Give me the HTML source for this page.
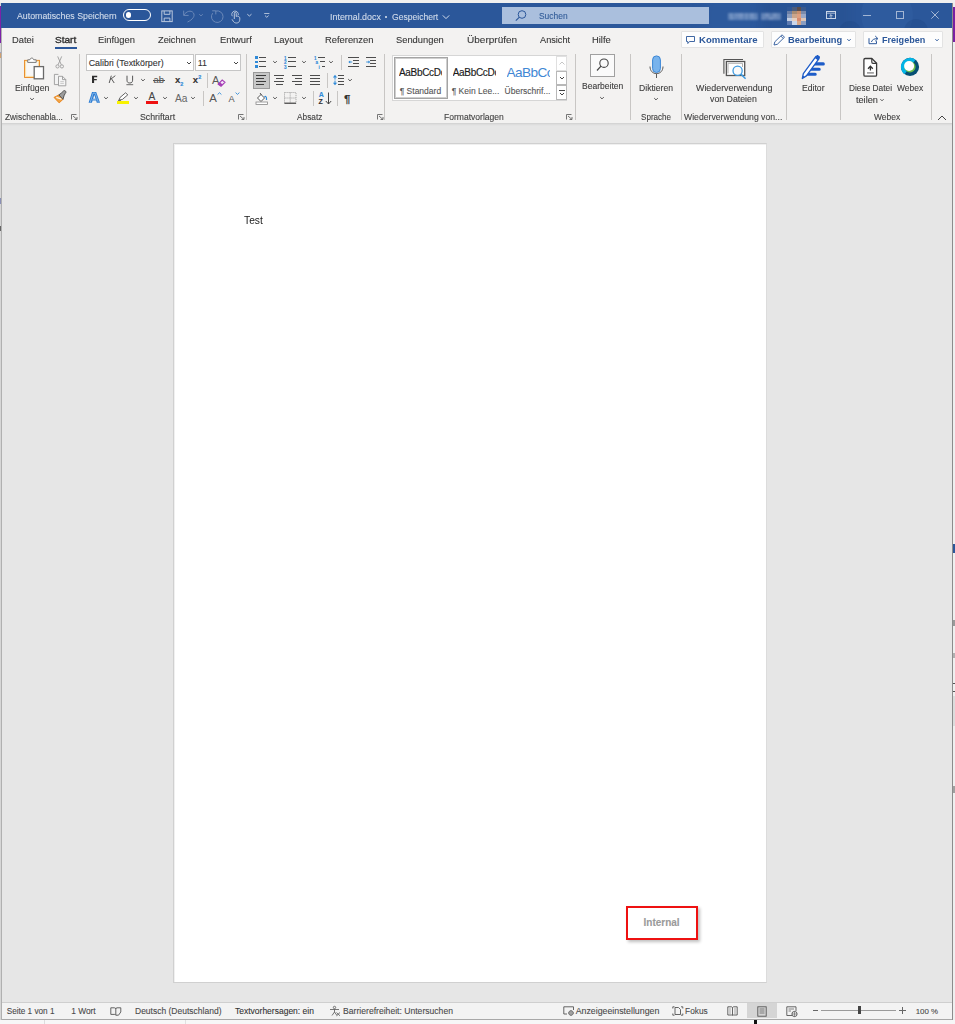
<!DOCTYPE html>
<html><head><meta charset="utf-8">
<style>
*{margin:0;padding:0;box-sizing:border-box}
html,body{width:955px;height:1024px;overflow:hidden;background:#f6f6f6;font-family:"Liberation Sans",sans-serif;position:relative}
.a{position:absolute}
.t{position:absolute;white-space:nowrap;line-height:1;-webkit-text-stroke:0.1px currentColor}
svg.a{overflow:visible}
</style></head><body>

<div class="a" style="left:0px;top:0px;width:955px;height:3px;background:#f0f0f0"></div>
<div class="a" style="left:0px;top:3px;width:1px;height:1021px;background:#d6d6d6"></div>
<div class="a" style="left:0px;top:6px;width:1px;height:37px;background:#7b22a8"></div>
<div class="a" style="left:0px;top:52px;width:1px;height:2px;background:#9aa0c8"></div>
<div class="a" style="left:0px;top:53px;width:1px;height:5px;background:#d0a070"></div>
<div class="a" style="left:0px;top:198px;width:1px;height:6px;background:#8a8fb5"></div>
<div class="a" style="left:0px;top:226px;width:1px;height:5px;background:#666"></div>
<div class="a" style="left:953px;top:3px;width:2px;height:1021px;background:#efefef"></div>
<div class="a" style="left:953px;top:7px;width:2px;height:35px;background:#7b1fa2"></div>
<div class="a" style="left:953px;top:544px;width:2px;height:9px;background:#2b579a"></div>
<div class="a" style="left:953px;top:620px;width:2px;height:6px;background:#9a9a9a"></div>
<div class="a" style="left:953px;top:653px;width:2px;height:5px;background:#b0b0b0"></div>
<div class="a" style="left:953px;top:683px;width:2px;height:1px;background:#555"></div>
<div class="a" style="left:953px;top:691px;width:2px;height:1px;background:#555"></div>
<div class="a" style="left:953px;top:696px;width:2px;height:30px;background:#dcdcdc"></div>
<div class="a" style="left:953px;top:786px;width:2px;height:7px;background:#a0a0a0"></div>
<div class="a" style="left:1px;top:3px;width:952px;height:1017px;background:#e6e6e6;border-left:1px solid #b0b0b0;border-right:1px solid #8c8c8c"></div>
<div class="a" style="left:1px;top:3px;width:951px;height:25px;background:#2b579a"></div>
<div class="a" style="left:1px;top:3px;width:951px;height:25px;overflow:hidden"><div class="a" style="left:700px;top:-20px;width:60px;height:70px;border-radius:50%;background:rgba(70,120,190,.10);filter:blur(6px)"></div><div class="a" style="left:760px;top:-10px;width:90px;height:50px;background:rgba(20,50,100,.10);filter:blur(6px)"></div><div class="a" style="left:860px;top:-14px;width:52px;height:52px;border-radius:50%;background:rgba(80,130,200,.10)"></div><div class="a" style="left:903px;top:16px;width:24px;height:24px;border-radius:50%;background:rgba(10,40,90,.12)"></div><div class="a" style="left:838px;top:18px;width:22px;height:22px;border-radius:50%;background:rgba(10,40,90,.10)"></div></div>
<div class="t" style="left:17.30px;top:11px;font-size:9.4px;color:#d3ddec;font-weight:normal;transform:scaleX(0.9382);transform-origin:0 0;">Automatisches Speichern</div>
<div class="a" style="left:123px;top:9px;width:28px;height:12px;border:1.3px solid #fff;border-radius:6px"></div>
<div class="a" style="left:125.8px;top:12.2px;width:5.6px;height:5.6px;background:#fff;border-radius:50%"></div>
<svg class="a" style="left:158px;top:6px;" width="70" height="20" viewBox="0 0 70 20"><rect x="3.8" y="4.9" width="10.4" height="10.7" fill="none" stroke="#b9c7dd" stroke-width="1"/><path d="M6.2 4.9 V8.3 H11.9 V4.9 M6.2 15.6 V12.1 H11.9 V15.6" fill="none" stroke="#b9c7dd" stroke-width="1"/><path d="M25.7 4.6 V9.4 H30.6" fill="none" stroke="#6b89b9" stroke-width="1"/><path d="M25.8 9.2 C28.2 5.2 33 3.8 35.3 6.8 C37.6 9.8 34.5 13.8 29.5 16" fill="none" stroke="#6b89b9" stroke-width="1"/><path d="M41.2 8.2 L43 9.9 L44.8 8.2" fill="none" stroke="#6b89b9" stroke-width="0.9"/><path d="M57.6 5.1 A5.8 5.8 0 1 1 54.6 7.2" fill="none" stroke="#6b89b9" stroke-width="1"/><path d="M54.2 4.8 H57.8 V8.4" fill="none" stroke="#6b89b9" stroke-width="1"/></svg>
<svg class="a" style="left:226px;top:6px;" width="50" height="20" viewBox="0 0 50 20"><path d="M6.3 10.2 A3.3 3.3 0 1 1 12.3 9" fill="none" stroke="#b9c7dd" stroke-width="0.9"/><path d="M8.3 13 V7.2 A0.95 0.95 0 0 1 10.2 7.2 V10.6" fill="none" stroke="#b9c7dd" stroke-width="1"/><path d="M10.2 10.3 C11.6 9.8 13 10.2 13.5 11.2 C14 12.3 13.9 14 13.4 15.3 C12.8 16.6 11.6 17 10.4 17 C9 17 8 16.4 7.2 15.2 L6 13.3" fill="none" stroke="#b9c7dd" stroke-width="1"/><path d="M21.3 8.2 L23.4 10 L25.5 8.2" fill="none" stroke="#b9c7dd" stroke-width="1"/><path d="M38.2 7.5 H43.4" stroke="#b9c7dd" stroke-width="0.9"/><path d="M39 9.6 L40.8 11.3 L42.6 9.6" fill="none" stroke="#b9c7dd" stroke-width="1"/></svg>
<div class="t" style="left:329.50px;top:12px;font-size:9.4px;color:#d3ddec;font-weight:normal;transform:scaleX(0.9476);transform-origin:0 0;">Internal.docx</div>
<div class="a" style="left:385.3px;top:15.5px;width:2px;height:2px;background:#dfe7f3;border-radius:50%"></div>
<div class="t" style="left:392.10px;top:12px;font-size:9.4px;color:#d3ddec;font-weight:normal;transform:scaleX(0.9136);transform-origin:0 0;">Gespeichert</div>
<svg class="a" style="left:442px;top:13.5px;" width="8" height="6" viewBox="0 0 8 6"><path d="M0.80 1.40 L4 4.60 L7.20 1.40" fill="none" stroke="#d3ddec" stroke-width="1"/></svg>
<div class="a" style="left:502px;top:7px;width:207px;height:17px;background:#aabfdd"></div>
<svg class="a" style="left:514px;top:9px;" width="14" height="14" viewBox="0 0 14 14"><circle cx="8" cy="5.5" r="3.8" fill="none" stroke="#2b579a" stroke-width="1"/><path d="M5.2 8.3 L1.8 11.7" stroke="#2b579a" stroke-width="1.1"/></svg>
<div class="t" style="left:539.20px;top:11px;font-size:9.6px;color:#2f5a97;font-weight:normal;transform:scaleX(0.8784);transform-origin:0 0;">Suchen</div>
<div class="a" style="left:0;top:0;width:955px;height:30px;filter:blur(0.8px)"><div class="a" style="left:727.5px;top:13px;width:4.0px;height:3.5px;background:rgba(200,215,240,0.36)"></div><div class="a" style="left:727.5px;top:16.5px;width:4.0px;height:3.5px;background:rgba(200,215,240,0.33)"></div><div class="a" style="left:731.2px;top:13px;width:4.0px;height:3.5px;background:rgba(200,215,240,0.33)"></div><div class="a" style="left:731.2px;top:16.5px;width:4.0px;height:3.5px;background:rgba(200,215,240,0.36)"></div><div class="a" style="left:735.0px;top:13px;width:4.0px;height:3.5px;background:rgba(200,215,240,0.41)"></div><div class="a" style="left:735.0px;top:16.5px;width:4.0px;height:3.5px;background:rgba(200,215,240,0.33)"></div><div class="a" style="left:738.8px;top:13px;width:4.0px;height:3.5px;background:rgba(200,215,240,0.47)"></div><div class="a" style="left:738.8px;top:16.5px;width:4.0px;height:3.5px;background:rgba(200,215,240,0.39)"></div><div class="a" style="left:742.5px;top:13px;width:4.0px;height:3.5px;background:rgba(200,215,240,0.33)"></div><div class="a" style="left:742.5px;top:16.5px;width:4.0px;height:3.5px;background:rgba(200,215,240,0.30)"></div><div class="a" style="left:746.2px;top:13px;width:4.0px;height:3.5px;background:rgba(200,215,240,0.33)"></div><div class="a" style="left:746.2px;top:16.5px;width:4.0px;height:3.5px;background:rgba(200,215,240,0.30)"></div><div class="a" style="left:750.0px;top:13px;width:4.0px;height:3.5px;background:rgba(200,215,240,0.47)"></div><div class="a" style="left:750.0px;top:16.5px;width:4.0px;height:3.5px;background:rgba(200,215,240,0.41)"></div><div class="a" style="left:753.8px;top:13px;width:4.0px;height:3.5px;background:rgba(200,215,240,0.33)"></div><div class="a" style="left:753.8px;top:16.5px;width:4.0px;height:3.5px;background:rgba(200,215,240,0.36)"></div><div class="a" style="left:761.0px;top:13px;width:4.2px;height:3.5px;background:rgba(200,215,240,0.36)"></div><div class="a" style="left:761.0px;top:16.5px;width:4.2px;height:3.5px;background:rgba(200,215,240,0.39)"></div><div class="a" style="left:764.9px;top:13px;width:4.2px;height:3.5px;background:rgba(200,215,240,0.47)"></div><div class="a" style="left:764.9px;top:16.5px;width:4.2px;height:3.5px;background:rgba(200,215,240,0.33)"></div><div class="a" style="left:768.8px;top:13px;width:4.2px;height:3.5px;background:rgba(200,215,240,0.33)"></div><div class="a" style="left:768.8px;top:16.5px;width:4.2px;height:3.5px;background:rgba(200,215,240,0.47)"></div><div class="a" style="left:772.7px;top:13px;width:4.2px;height:3.5px;background:rgba(200,215,240,0.47)"></div><div class="a" style="left:772.7px;top:16.5px;width:4.2px;height:3.5px;background:rgba(200,215,240,0.39)"></div><div class="a" style="left:776.6px;top:13px;width:4.2px;height:3.5px;background:rgba(200,215,240,0.36)"></div><div class="a" style="left:776.6px;top:16.5px;width:4.2px;height:3.5px;background:rgba(200,215,240,0.36)"></div></div>
<div class="a" style="left:787px;top:7px;width:19px;height:18px;display:grid;grid-template-columns:repeat(4,1fr);grid-template-rows:repeat(5,1fr);filter:blur(0.5px)"><div style="background:#2f5796"></div><div style="background:#4d5d7c"></div><div style="background:#5e4f4b"></div><div style="background:#3b5a8c"></div><div style="background:#6b7fa6"></div><div style="background:#a78b73"></div><div style="background:#c98f6d"></div><div style="background:#7b8bab"></div><div style="background:#8b9cbc"></div><div style="background:#cba58b"></div><div style="background:#df9f7f"></div><div style="background:#9ba9c6"></div><div style="background:#c6d0e2"></div><div style="background:#e6cfbf"></div><div style="background:#d88b70"></div><div style="background:#dec7b7"></div><div style="background:#5e7bb1"></div><div style="background:#c9d5ea"></div><div style="background:#d7a787"></div><div style="background:#8a9dc1"></div></div>
<svg class="a" style="left:826px;top:11px;" width="10" height="8" viewBox="0 0 10 8"><rect x="0.5" y="0.5" width="9" height="7" fill="none" stroke="#c9d5e8" stroke-width="1"/><path d="M0.5 2.2 H9.5" stroke="#c9d5e8" stroke-width="0.8"/><path d="M5 6.8 V3.8 M3.4 5.2 L5 3.6 L6.6 5.2" fill="none" stroke="#c9d5e8" stroke-width="0.9"/></svg>
<div class="a" style="left:863px;top:15px;width:8px;height:1px;background:#a3b6d4"></div>
<div class="a" style="left:896px;top:11px;width:8px;height:8px;border:1px solid #a3b6d4"></div>
<svg class="a" style="left:931px;top:11px;" width="8" height="8" viewBox="0 0 8 8"><path d="M0.3 0.3 L7.7 7.7 M7.7 0.3 L0.3 7.7" stroke="#a3b6d4" stroke-width="1"/></svg>
<div class="a" style="left:2px;top:28px;width:950px;height:22px;background:#f3f2f1"></div>
<div class="t" style="left:11.60px;top:35px;font-size:9.4px;color:#363636;font-weight:normal;transform:scaleX(0.9934);transform-origin:0 0;">Datei</div>
<div class="t" style="left:54.80px;top:35px;font-size:9.4px;color:#363636;font-weight:normal;-webkit-text-stroke:0.35px #2a2a2a;transform:scaleX(1.0730);transform-origin:0 0;">Start</div>
<div class="t" style="left:97.50px;top:35px;font-size:9.4px;color:#363636;font-weight:normal;transform:scaleX(0.9970);transform-origin:0 0;">Einfügen</div>
<div class="t" style="left:157.80px;top:35px;font-size:9.4px;color:#363636;font-weight:normal;transform:scaleX(0.9826);transform-origin:0 0;">Zeichnen</div>
<div class="t" style="left:219.60px;top:35px;font-size:9.4px;color:#363636;font-weight:normal;transform:scaleX(1.0010);transform-origin:0 0;">Entwurf</div>
<div class="t" style="left:273.60px;top:35px;font-size:9.4px;color:#363636;font-weight:normal;transform:scaleX(1.0169);transform-origin:0 0;">Layout</div>
<div class="t" style="left:324.90px;top:35px;font-size:9.4px;color:#363636;font-weight:normal;transform:scaleX(0.9980);transform-origin:0 0;">Referenzen</div>
<div class="t" style="left:396.10px;top:35px;font-size:9.4px;color:#363636;font-weight:normal;transform:scaleX(0.9959);transform-origin:0 0;">Sendungen</div>
<div class="t" style="left:466.90px;top:35px;font-size:9.4px;color:#363636;font-weight:normal;transform:scaleX(1.0696);transform-origin:0 0;">Überprüfen</div>
<div class="t" style="left:539.60px;top:35px;font-size:9.4px;color:#363636;font-weight:normal;transform:scaleX(0.9797);transform-origin:0 0;">Ansicht</div>
<div class="t" style="left:592.20px;top:35px;font-size:9.4px;color:#363636;font-weight:normal;transform:scaleX(0.9997);transform-origin:0 0;">Hilfe</div>
<div class="a" style="left:54.7px;top:47px;width:22.3px;height:2px;background:#2b579a"></div>
<div class="a" style="left:681px;top:31px;width:83px;height:17px;background:#fdfdfd;border:1px solid #e3e3e3;border-radius:1px"></div>
<svg class="a" style="left:686px;top:35.5px;" width="10" height="9" viewBox="0 0 10 9"><path d="M0.5 0.5 H8.5 V5.5 H3.5 L1.8 7.5 V5.5 H0.5 Z" fill="none" stroke="#2b579a" stroke-width="0.9"/></svg>
<div class="t" style="left:698.80px;top:36px;font-size:9.3px;color:#2b579a;font-weight:bold;-webkit-text-stroke:0;transform:scaleX(1.0308);transform-origin:0 0;">Kommentare</div>
<div class="a" style="left:771px;top:31px;width:85px;height:17px;background:#fdfdfd;border:1px solid #e3e3e3;border-radius:1px"></div>
<svg class="a" style="left:772.5px;top:33.5px;" width="13" height="12" viewBox="0 0 13 12"><path d="M1 11 L1.8 7.8 L9 0.8 L11.5 3.2 L4.3 10.3 Z M7.8 2 L10.2 4.4" fill="none" stroke="#2b579a" stroke-width="0.9"/></svg>
<div class="t" style="left:787.90px;top:36px;font-size:9.3px;color:#2b579a;font-weight:bold;-webkit-text-stroke:0;transform:scaleX(0.9990);transform-origin:0 0;">Bearbeitung</div>
<svg class="a" style="left:844.5px;top:36.8px;" width="8" height="6" viewBox="0 0 8 6"><path d="M2.40 2.20 L4 3.80 L5.60 2.20" fill="none" stroke="#2b579a" stroke-width="1"/></svg>
<div class="a" style="left:863px;top:31px;width:80px;height:17px;background:#fdfdfd;border:1px solid #e3e3e3;border-radius:1px"></div>
<svg class="a" style="left:868px;top:35px;" width="11" height="10" viewBox="0 0 11 10"><path d="M1 3.2 V8.7 H8.5 V6.2" fill="none" stroke="#2b579a" stroke-width="1"/><path d="M3.4 7 C4.2 4.6 6.2 3.6 9.4 3.6" fill="none" stroke="#2b579a" stroke-width="1"/><path d="M7.2 1 L9.9 3.6 L7.2 6.2" fill="none" stroke="#2b579a" stroke-width="1"/></svg>
<div class="t" style="left:881.70px;top:36px;font-size:9.3px;color:#2b579a;font-weight:bold;-webkit-text-stroke:0;transform:scaleX(0.9743);transform-origin:0 0;">Freigeben</div>
<svg class="a" style="left:932.7px;top:37px;" width="8" height="6" viewBox="0 0 8 6"><path d="M2.40 2.20 L4 3.80 L5.60 2.20" fill="none" stroke="#2b579a" stroke-width="1"/></svg>
<div class="a" style="left:2px;top:50px;width:950px;height:73px;background:#f3f2f1"></div>
<div class="a" style="left:2px;top:123px;width:950px;height:1px;background:#d4d4d4"></div>
<div class="a" style="left:2px;top:124px;width:950px;height:2px;background:linear-gradient(#dadada,#e6e6e6)"></div>
<div class="a" style="left:79px;top:54px;width:1px;height:66px;background:#c8c6c4"></div>
<div class="a" style="left:246px;top:54px;width:1px;height:66px;background:#c8c6c4"></div>
<div class="a" style="left:384px;top:54px;width:1px;height:66px;background:#c8c6c4"></div>
<div class="a" style="left:575px;top:54px;width:1px;height:66px;background:#c8c6c4"></div>
<div class="a" style="left:630px;top:54px;width:1px;height:66px;background:#c8c6c4"></div>
<div class="a" style="left:681px;top:54px;width:1px;height:66px;background:#c8c6c4"></div>
<div class="a" style="left:786px;top:54px;width:1px;height:66px;background:#c8c6c4"></div>
<div class="a" style="left:840px;top:54px;width:1px;height:66px;background:#c8c6c4"></div>
<div class="a" style="left:931px;top:54px;width:1px;height:66px;background:#c8c6c4"></div>
<svg class="a" style="left:20px;top:54px;" width="28" height="28" viewBox="0 0 28 28"><rect x="4.6" y="6.4" width="14.8" height="17" fill="#f8f8f8" stroke="#e8861e" stroke-width="1"/><rect x="5.6" y="7.4" width="12.8" height="15" fill="none" stroke="#fbe2a8" stroke-width="1"/><path d="M7.7 8.4 V5.8 H9.9 C10.3 3.5 13.3 3.5 13.7 5.8 H16.2 V8.4 Z" fill="#fff" stroke="#7a7a7a" stroke-width="1"/><rect x="14.2" y="12.6" width="9.3" height="12.2" fill="#fff" stroke="#6a6a6a" stroke-width="1.3"/></svg>
<div class="t" style="left:14.60px;top:84px;font-size:8.9px;color:#3b3b3b;font-weight:normal;transform:scaleX(0.9791);transform-origin:0 0;">Einfügen</div>
<svg class="a" style="left:27.9px;top:95.8px;" width="8" height="6" viewBox="0 0 8 6"><path d="M2.20 2.10 L4 3.90 L5.80 2.10" fill="none" stroke="#555" stroke-width="1"/></svg>
<svg class="a" style="left:50px;top:52px;" width="20" height="36" viewBox="0 0 20 36"><path d="M7.7 4.4 L11.3 12.8 M11.7 4.4 L8.1 12.8" stroke="#9c9c9c" stroke-width="0.9"/><circle cx="7.5" cy="14.4" r="1.6" fill="none" stroke="#9c9c9c" stroke-width="0.9"/><circle cx="11.9" cy="14.4" r="1.6" fill="none" stroke="#9c9c9c" stroke-width="0.9"/><path d="M8.4 22.4 H4.4 V32.6 H8.4" fill="#f3f3f3" stroke="#9a9a9a" stroke-width="0.9"/><path d="M8.5 24.3 H12.5 L15.8 27.6 V33.8 H8.5 Z" fill="#f5f5f5" stroke="#9a9a9a" stroke-width="0.9"/><path d="M12.5 24.3 V27.6 H15.8" fill="none" stroke="#9a9a9a" stroke-width="0.9"/><path d="M10.3 29.6 H13.9 M10.3 31.4 H13.9" stroke="#b8b8b8" stroke-width="0.7"/></svg>
<svg class="a" style="left:50px;top:88px;" width="20" height="18" viewBox="0 0 20 18"><path d="M4 9.4 L8.8 6.9 L13 11.3 L9.2 14.9 Z" fill="#f2a444" stroke="#e6801a" stroke-width="0.9" stroke-linejoin="round"/><path d="M6.3 9.3 L11.6 11.2" stroke="#fbf6ee" stroke-width="1.3"/><path d="M8.8 6.9 L11.2 5.2 L13.2 3.3 C13.8 2.4 15 2.3 15.6 3.2 C16.2 4 15.9 5 15.1 5.6 L14 7.8 L13 11.3 Z" fill="#9c9c9c" stroke="#4a4a4a" stroke-width="0.9" stroke-linejoin="round"/></svg>
<div class="t" style="left:5.20px;top:113px;font-size:8.9px;color:#404040;font-weight:normal;transform:scaleX(0.9396);transform-origin:0 0;">Zwischenabla...</div>
<svg class="a" style="left:71px;top:114px;" width="7" height="6" viewBox="0 0 7 6"><path d="M0.5 5.5 V0.5 H5.5" fill="none" stroke="#666" stroke-width="0.9"/><path d="M2 2 L6 5.5 M6 3 V5.5 H3.5" fill="none" stroke="#666" stroke-width="0.9"/></svg>
<div class="a" style="left:86px;top:54px;width:108px;height:16.5px;background:#fff;border:1px solid #c6c6c6"></div>
<div class="t" style="left:88.70px;top:59px;font-size:8.9px;color:#333;font-weight:normal;">Calibri (Textkörper)</div>
<svg class="a" style="left:184.7px;top:60.2px;" width="8" height="6" viewBox="0 0 8 6"><path d="M2.00 2.00 L4 4.00 L6.00 2.00" fill="none" stroke="#444" stroke-width="1"/></svg>
<div class="a" style="left:195px;top:54px;width:46px;height:16.5px;background:#fff;border:1px solid #c6c6c6"></div>
<div class="t" style="left:197.70px;top:59px;font-size:8.9px;color:#333;font-weight:normal;">11</div>
<svg class="a" style="left:231.9px;top:60.2px;" width="8" height="6" viewBox="0 0 8 6"><path d="M2.00 2.00 L4 4.00 L6.00 2.00" fill="none" stroke="#444" stroke-width="1"/></svg>
<svg class="a" style="left:90px;top:74px;" width="46" height="12" viewBox="0 0 46 12"><path d="M2 1.7 H7.2 V3.2 H4.1 V4.9 H6.8 V6.3 H4.1 V9 H2 Z" fill="#2e2e2e"/><path d="M19.2 9 L21.3 1.7 M25.3 1.7 L20.2 5.6 M21.5 4.8 L24.2 9" fill="none" stroke="#5a5a5a" stroke-width="1"/><path d="M37 1.7 V6.2 C37 8.2 38.1 9 39.8 9 C41.5 9 42.6 8.2 42.6 6.2 V1.7" fill="none" stroke="#555" stroke-width="1"/><path d="M36.4 10.7 H43.2" stroke="#6a6a6a" stroke-width="1"/></svg>
<svg class="a" style="left:139.4px;top:77px;" width="8" height="6" viewBox="0 0 8 6"><path d="M2.20 2.10 L4 3.90 L5.80 2.10" fill="none" stroke="#555" stroke-width="1"/></svg>
<div class="t" style="left:153.50px;top:75px;font-size:9.4px;color:#555;font-weight:normal;">ab</div>
<div class="a" style="left:152.8px;top:79.5px;width:12.5px;height:1px;background:#555"></div>
<div class="t" style="left:175.00px;top:75px;font-size:9.6px;color:#333;font-weight:bold;">x</div>
<div class="t" style="left:180.30px;top:82px;font-size:5.5px;color:#2f8ad8;font-weight:bold;">2</div>
<div class="t" style="left:192.80px;top:75px;font-size:9.6px;color:#333;font-weight:bold;">x</div>
<div class="t" style="left:198.20px;top:75px;font-size:5.5px;color:#2f8ad8;font-weight:bold;">2</div>
<div class="a" style="left:206.7px;top:73px;width:1px;height:15px;background:#c8c6c4"></div>
<div class="t" style="left:212.00px;top:75px;font-size:11px;color:#5a5a5a;font-weight:normal;-webkit-text-stroke:0;">A</div>
<svg class="a" style="left:216.5px;top:78.5px;" width="9" height="8" viewBox="0 0 9 8"><path d="M1.2 5.2 L5.2 1 L8 3.2 L4 7.2 Z" fill="#f4e6f7" stroke="#a43db5" stroke-width="1.1"/><path d="M1.2 5.2 L3 3.3 L5.6 5.6 L4 7.2 Z" fill="#a43db5"/></svg>
<svg class="a" style="left:86px;top:90px;" width="18" height="16" viewBox="0 0 18 16"><path d="M2.6 12.8 L6 2.1 H10.2 L14 12.8 H10.8 L10.1 10.6 H6.6 L5.9 12.8 Z M7.1 8.7 H9.6 L8.3 5 Z" fill="#2b7cd3" fill-rule="evenodd"/><path d="M4.3 12.2 L7.1 3.1 H9.2 L12.3 12.2 M6.3 9.7 H10.4" fill="none" stroke="#b9d7f3" stroke-width="0.6"/></svg>
<svg class="a" style="left:102.2px;top:95.3px;" width="8" height="6" viewBox="0 0 8 6"><path d="M2.20 2.10 L4 3.90 L5.80 2.10" fill="none" stroke="#555" stroke-width="1"/></svg>
<svg class="a" style="left:117px;top:91.5px;" width="13" height="9" viewBox="0 0 13 9"><path d="M2 8 L3 5.5 L8.5 0.8 L10.8 2.8 L5.3 7.5 Z" fill="#fff" stroke="#555" stroke-width="0.9"/><path d="M1 8.5 H4" stroke="#555" stroke-width="0.8"/></svg>
<div class="a" style="left:116.8px;top:101px;width:12.2px;height:3.2px;background:#f8f200"></div>
<svg class="a" style="left:132.1px;top:95.3px;" width="8" height="6" viewBox="0 0 8 6"><path d="M2.20 2.10 L4 3.90 L5.80 2.10" fill="none" stroke="#555" stroke-width="1"/></svg>
<div class="t" style="left:148.50px;top:92px;font-size:10.2px;color:#444;font-weight:normal;">A</div>
<div class="a" style="left:146px;top:101px;width:12px;height:3.2px;background:#ee1111"></div>
<svg class="a" style="left:161.1px;top:95.3px;" width="8" height="6" viewBox="0 0 8 6"><path d="M2.20 2.10 L4 3.90 L5.80 2.10" fill="none" stroke="#555" stroke-width="1"/></svg>
<div class="t" style="left:175.00px;top:94px;font-size:10.2px;color:#666;font-weight:normal;-webkit-text-stroke:0;">Aa</div>
<svg class="a" style="left:188.5px;top:95.3px;" width="8" height="6" viewBox="0 0 8 6"><path d="M2.20 2.10 L4 3.90 L5.80 2.10" fill="none" stroke="#555" stroke-width="1"/></svg>
<div class="a" style="left:203.4px;top:90.5px;width:1px;height:15.099999999999994px;background:#c8c6c4"></div>
<div class="t" style="left:209.30px;top:93px;font-size:11.4px;color:#555;font-weight:normal;-webkit-text-stroke:0;">A</div>
<svg class="a" style="left:216.8px;top:92px;" width="5" height="3" viewBox="0 0 5 3"><path d="M0.6 2.5 L2.5 0.7 L4.4 2.5" fill="none" stroke="#2f8ad8" stroke-width="0.9"/></svg>
<div class="t" style="left:228.60px;top:95px;font-size:9.2px;color:#555;font-weight:normal;-webkit-text-stroke:0;">A</div>
<svg class="a" style="left:235px;top:92.3px;" width="5" height="3" viewBox="0 0 5 3"><path d="M0.6 0.6 L2.5 2.4 L4.4 0.6" fill="none" stroke="#2f8ad8" stroke-width="0.9"/></svg>
<div class="t" style="left:140.00px;top:113px;font-size:8.9px;color:#404040;font-weight:normal;transform:scaleX(0.9885);transform-origin:0 0;">Schriftart</div>
<svg class="a" style="left:238px;top:114px;" width="7" height="6" viewBox="0 0 7 6"><path d="M0.5 5.5 V0.5 H5.5" fill="none" stroke="#666" stroke-width="0.9"/><path d="M2 2 L6 5.5 M6 3 V5.5 H3.5" fill="none" stroke="#666" stroke-width="0.9"/></svg>
<div class="a" style="left:255.2px;top:56.3px;width:2.5px;height:2.5px;background:#2f8ad8"></div>
<div class="a" style="left:259.1px;top:57.0px;width:7.3px;height:1.1px;background:#4d4d4d"></div>
<div class="a" style="left:255.2px;top:60.599999999999994px;width:2.5px;height:2.5px;background:#2f8ad8"></div>
<div class="a" style="left:259.1px;top:61.3px;width:7.3px;height:1.1px;background:#4d4d4d"></div>
<div class="a" style="left:255.2px;top:65.3px;width:2.5px;height:2.5px;background:#2f8ad8"></div>
<div class="a" style="left:259.1px;top:66.0px;width:7.3px;height:1.1px;background:#4d4d4d"></div>
<svg class="a" style="left:270.5px;top:59.2px;" width="8" height="6" viewBox="0 0 8 6"><path d="M2.20 2.10 L4 3.90 L5.80 2.10" fill="none" stroke="#555" stroke-width="1"/></svg>
<div class="a" style="left:288.2px;top:57.0px;width:7.7px;height:1.1px;background:#4d4d4d"></div>
<div class="a" style="left:288.2px;top:61.3px;width:7.7px;height:1.1px;background:#4d4d4d"></div>
<div class="a" style="left:288.2px;top:66.0px;width:7.7px;height:1.1px;background:#4d4d4d"></div>
<div class="t" style="left:284.00px;top:57px;font-size:4.6px;color:#2f8ad8;font-weight:bold;">1</div>
<div class="t" style="left:284.00px;top:61px;font-size:4.6px;color:#2f8ad8;font-weight:bold;">2</div>
<div class="t" style="left:284.00px;top:66px;font-size:4.6px;color:#2f8ad8;font-weight:bold;">3</div>
<svg class="a" style="left:299.5px;top:59.2px;" width="8" height="6" viewBox="0 0 8 6"><path d="M2.20 2.10 L4 3.90 L5.80 2.10" fill="none" stroke="#555" stroke-width="1"/></svg>
<div class="t" style="left:314.00px;top:57px;font-size:4.6px;color:#2f8ad8;font-weight:bold;">1</div>
<div class="t" style="left:315.50px;top:61px;font-size:4.6px;color:#2f8ad8;font-weight:bold;">a</div>
<div class="t" style="left:318.50px;top:66px;font-size:4.6px;color:#2f8ad8;font-weight:bold;">i</div>
<div class="a" style="left:317.5px;top:57px;width:7.4px;height:1.1px;background:#4d4d4d"></div>
<div class="a" style="left:320.2px;top:61.3px;width:4.7px;height:1.1px;background:#4d4d4d"></div>
<div class="a" style="left:321.8px;top:66px;width:3.1px;height:1.1px;background:#4d4d4d"></div>
<svg class="a" style="left:327.2px;top:59.2px;" width="8" height="6" viewBox="0 0 8 6"><path d="M2.20 2.10 L4 3.90 L5.80 2.10" fill="none" stroke="#555" stroke-width="1"/></svg>
<div class="a" style="left:341.4px;top:55px;width:1px;height:15px;background:#c8c6c4"></div>
<div class="a" style="left:348.1px;top:57px;width:10.6px;height:1.1px;background:#4d4d4d"></div>
<div class="a" style="left:352.6px;top:60px;width:6.1px;height:1.1px;background:#4d4d4d"></div>
<div class="a" style="left:352.6px;top:63px;width:6.1px;height:1.1px;background:#4d4d4d"></div>
<div class="a" style="left:348.1px;top:66px;width:10.6px;height:1.1px;background:#4d4d4d"></div>
<svg class="a" style="left:348.1px;top:59.5px;" width="5" height="4" viewBox="0 0 5 4"><path d="M4.2 2 H1.5" stroke="#2f8ad8" stroke-width="0.9"/><path d="M0.3 2 L2.2 0.4 V3.6 Z" fill="#2f8ad8"/></svg>
<div class="a" style="left:365.9px;top:57px;width:10.6px;height:1.1px;background:#4d4d4d"></div>
<div class="a" style="left:370.4px;top:60px;width:6.1px;height:1.1px;background:#4d4d4d"></div>
<div class="a" style="left:370.4px;top:63px;width:6.1px;height:1.1px;background:#4d4d4d"></div>
<div class="a" style="left:365.9px;top:66px;width:10.6px;height:1.1px;background:#4d4d4d"></div>
<svg class="a" style="left:365.9px;top:59.5px;" width="5" height="4" viewBox="0 0 5 4"><path d="M0.2 2 H2.9" stroke="#2f8ad8" stroke-width="0.9"/><path d="M4.4 2 L2.4 0.4 V3.6 Z" fill="#2f8ad8"/></svg>
<div class="a" style="left:253px;top:72px;width:16.5px;height:16.5px;background:#c8c8c8;border:1px solid #9a9a9a"></div>
<div class="a" style="left:256px;top:74.7px;width:10.399999999999977px;height:1.3px;background:#3d3d3d"></div>
<div class="a" style="left:256px;top:77.7px;width:7.5px;height:1.3px;background:#3d3d3d"></div>
<div class="a" style="left:256px;top:80.80000000000001px;width:10.399999999999977px;height:1.3px;background:#3d3d3d"></div>
<div class="a" style="left:256px;top:83.80000000000001px;width:7.5px;height:1.3px;background:#3d3d3d"></div>
<div class="a" style="left:274px;top:74.7px;width:10.300000000000011px;height:1.2px;background:#4d4d4d"></div>
<div class="a" style="left:275.6px;top:77.7px;width:7.2999999999999545px;height:1.2px;background:#4d4d4d"></div>
<div class="a" style="left:274px;top:80.80000000000001px;width:10.300000000000011px;height:1.2px;background:#4d4d4d"></div>
<div class="a" style="left:275.6px;top:83.80000000000001px;width:7.2999999999999545px;height:1.2px;background:#4d4d4d"></div>
<div class="a" style="left:292px;top:74.7px;width:10.300000000000011px;height:1.2px;background:#4d4d4d"></div>
<div class="a" style="left:295.3px;top:77.7px;width:7.0px;height:1.2px;background:#4d4d4d"></div>
<div class="a" style="left:292px;top:80.80000000000001px;width:10.300000000000011px;height:1.2px;background:#4d4d4d"></div>
<div class="a" style="left:295.3px;top:83.80000000000001px;width:7.0px;height:1.2px;background:#4d4d4d"></div>
<div class="a" style="left:310px;top:74.7px;width:10.2px;height:1.2px;background:#4d4d4d"></div>
<div class="a" style="left:310px;top:77.7px;width:10.2px;height:1.2px;background:#4d4d4d"></div>
<div class="a" style="left:310px;top:80.80000000000001px;width:10.2px;height:1.2px;background:#4d4d4d"></div>
<div class="a" style="left:310px;top:83.80000000000001px;width:10.2px;height:1.2px;background:#4d4d4d"></div>
<div class="a" style="left:326.5px;top:72.8px;width:1px;height:14.900000000000006px;background:#c8c6c4"></div>
<svg class="a" style="left:331.5px;top:74px;" width="6" height="12" viewBox="0 0 6 12"><path d="M3 3.2 V5.6 M3 6.6 V9" stroke="#2f8ad8" stroke-width="1"/><path d="M3 0.8 L0.9 3.4 H5.1 Z M3 11.3 L0.9 8.7 H5.1 Z" fill="#2f8ad8"/></svg>
<div class="a" style="left:337.9px;top:74.7px;width:6.3px;height:1.2px;background:#4d4d4d"></div>
<div class="a" style="left:337.9px;top:77.7px;width:6.3px;height:1.2px;background:#4d4d4d"></div>
<div class="a" style="left:337.9px;top:80.80000000000001px;width:6.3px;height:1.2px;background:#4d4d4d"></div>
<div class="a" style="left:337.9px;top:83.80000000000001px;width:6.3px;height:1.2px;background:#4d4d4d"></div>
<svg class="a" style="left:346px;top:77.2px;" width="8" height="6" viewBox="0 0 8 6"><path d="M2.20 2.10 L4 3.90 L5.80 2.10" fill="none" stroke="#555" stroke-width="1"/></svg>
<svg class="a" style="left:254.5px;top:91.5px;" width="14" height="13" viewBox="0 0 14 13"><path d="M2.5 6 L6 2.5 L9.5 6 L6 9.5 Z" fill="#fff" stroke="#444" stroke-width="0.9"/><path d="M5 1 L6.5 3" stroke="#444" stroke-width="0.9"/><path d="M9.5 5 C10.5 4 11.5 4.5 11.5 6.5 V8" fill="none" stroke="#2f8ad8" stroke-width="1.2"/><rect x="1" y="10" width="11.5" height="2.5" fill="#fff" stroke="#888" stroke-width="0.8"/></svg>
<svg class="a" style="left:270.5px;top:95.3px;" width="8" height="6" viewBox="0 0 8 6"><path d="M2.20 2.10 L4 3.90 L5.80 2.10" fill="none" stroke="#555" stroke-width="1"/></svg>
<svg class="a" style="left:284px;top:91.8px;" width="12.5" height="12" viewBox="0 0 12.5 12"><rect x="0.5" y="0.5" width="11.5" height="11" fill="none" stroke="#999" stroke-width="0.8" stroke-dasharray="1.2 0.8"/><path d="M6.2 0.5 V11.5 M0.5 6 H12" stroke="#999" stroke-width="0.8" stroke-dasharray="1.2 0.8"/><path d="M0.5 11.2 H12" stroke="#444" stroke-width="1.2"/></svg>
<svg class="a" style="left:299.5px;top:95.3px;" width="8" height="6" viewBox="0 0 8 6"><path d="M2.20 2.10 L4 3.90 L5.80 2.10" fill="none" stroke="#555" stroke-width="1"/></svg>
<div class="a" style="left:313.3px;top:90.8px;width:1px;height:15.0px;background:#c8c6c4"></div>
<div class="t" style="left:318.80px;top:91px;font-size:7px;color:#2f8ad8;font-weight:bold;">A</div>
<div class="t" style="left:318.60px;top:98px;font-size:7px;color:#333;font-weight:bold;">Z</div>
<svg class="a" style="left:324.8px;top:91.5px;" width="7" height="13" viewBox="0 0 7 13"><path d="M3.5 0.5 V12 M0.8 9 L3.5 12 L6.2 9" fill="none" stroke="#444" stroke-width="1"/></svg>
<div class="a" style="left:336.6px;top:90.8px;width:1px;height:15.0px;background:#c8c6c4"></div>
<div class="t" style="left:344.00px;top:94px;font-size:11.5px;color:#333;font-weight:bold;">¶</div>
<div class="t" style="left:297.20px;top:113px;font-size:8.9px;color:#404040;font-weight:normal;transform:scaleX(0.9335);transform-origin:0 0;">Absatz</div>
<svg class="a" style="left:376.5px;top:114px;" width="7" height="6" viewBox="0 0 7 6"><path d="M0.5 5.5 V0.5 H5.5" fill="none" stroke="#666" stroke-width="0.9"/><path d="M2 2 L6 5.5 M6 3 V5.5 H3.5" fill="none" stroke="#666" stroke-width="0.9"/></svg>
<div class="a" style="left:392px;top:55px;width:175px;height:45.5px;background:#fff;border:1px solid #d6d6d6"></div>
<div class="a" style="left:394px;top:57px;width:54px;height:42px;background:#fff;border:1px solid #a4a4a4;box-shadow:inset 0 0 0 1px #cfcfcf"></div>
<div class="t" style="left:398.90px;top:68px;font-size:10px;color:#1a1a1a;font-weight:normal;width:43.5px;overflow:hidden;-webkit-text-stroke:0.15px #1a1a1a;letter-spacing:-0.3px;">AaBbCcDc</div>
<div class="t" style="left:399.70px;top:87px;font-size:8.5px;color:#555;font-weight:normal;">¶ Standard</div>
<div class="t" style="left:452.70px;top:68px;font-size:10px;color:#1a1a1a;font-weight:normal;width:43.5px;overflow:hidden;-webkit-text-stroke:0.15px #1a1a1a;letter-spacing:-0.3px;">AaBbCcDc</div>
<div class="t" style="left:451.70px;top:87px;font-size:8.5px;color:#555;font-weight:normal;">¶ Kein Lee...</div>
<div class="t" style="left:506.60px;top:66px;font-size:13.6px;color:#3f87d4;font-weight:normal;width:43.5px;overflow:hidden;letter-spacing:-0.6px;-webkit-text-stroke:0;">AaBbCc</div>
<div class="t" style="left:504.60px;top:87px;font-size:8.5px;color:#555;font-weight:normal;">Überschrif...</div>
<div class="a" style="left:556.4px;top:55.8px;width:10.5px;height:15.5px;background:#fff;border:1px solid #e0e0e0"></div>
<svg class="a" style="left:558px;top:60px;" width="8" height="6" viewBox="0 0 8 6"><path d="M1.5 4.5 L4 2 L6.5 4.5" fill="none" stroke="#c0c0c0" stroke-width="0.9"/></svg>
<div class="a" style="left:556.4px;top:71.3px;width:10.5px;height:14px;background:#fff;border:1px solid #b8b8b8"></div>
<svg class="a" style="left:557.6px;top:75.3px;" width="8" height="6" viewBox="0 0 8 6"><path d="M2.00 2.00 L4 4.00 L6.00 2.00" fill="none" stroke="#444" stroke-width="1"/></svg>
<div class="a" style="left:556.4px;top:85.1px;width:10.5px;height:15px;background:#fff;border:1px solid #b8b8b8"></div>
<div class="a" style="left:558.6px;top:90.3px;width:6px;height:1px;background:#444"></div>
<svg class="a" style="left:557.6px;top:90.8px;" width="8" height="6" viewBox="0 0 8 6"><path d="M2.00 2.00 L4 4.00 L6.00 2.00" fill="none" stroke="#444" stroke-width="1"/></svg>
<div class="t" style="left:444.20px;top:113px;font-size:8.9px;color:#404040;font-weight:normal;transform:scaleX(0.9626);transform-origin:0 0;">Formatvorlagen</div>
<svg class="a" style="left:566.2px;top:114px;" width="7" height="6" viewBox="0 0 7 6"><path d="M0.5 5.5 V0.5 H5.5" fill="none" stroke="#666" stroke-width="0.9"/><path d="M2 2 L6 5.5 M6 3 V5.5 H3.5" fill="none" stroke="#666" stroke-width="0.9"/></svg>
<div class="a" style="left:590.4px;top:54px;width:24.2px;height:22.6px;background:#fafafa;border:1px solid #a0a0a0"></div>
<svg class="a" style="left:594px;top:57px;" width="16" height="16" viewBox="0 0 16 16"><circle cx="10" cy="6.2" r="4.2" fill="none" stroke="#444" stroke-width="1.1"/><path d="M7 9.2 L3 13.5" stroke="#444" stroke-width="1.2"/></svg>
<div class="t" style="left:581.90px;top:82px;font-size:8.9px;color:#3b3b3b;font-weight:normal;transform:scaleX(0.9640);transform-origin:0 0;">Bearbeiten</div>
<svg class="a" style="left:598px;top:94.5px;" width="8" height="6" viewBox="0 0 8 6"><path d="M2.20 2.10 L4 3.90 L5.80 2.10" fill="none" stroke="#555" stroke-width="1"/></svg>
<svg class="a" style="left:648px;top:55px;" width="17" height="24" viewBox="0 0 17 24"><rect x="4.6" y="0.9" width="7.8" height="16.6" rx="3.9" fill="#78b3ec" stroke="#3a86d6" stroke-width="1"/><path d="M2 11.5 C2 15.8 4.7 18.6 8.5 18.6 C12.3 18.6 15 15.8 15 11.5" fill="none" stroke="#5a5a5a" stroke-width="1"/><path d="M8.5 18.6 V23" stroke="#5a5a5a" stroke-width="1"/></svg>
<div class="t" style="left:638.90px;top:84px;font-size:8.9px;color:#3b3b3b;font-weight:normal;transform:scaleX(0.9710);transform-origin:0 0;">Diktieren</div>
<svg class="a" style="left:652.1px;top:96px;" width="8" height="6" viewBox="0 0 8 6"><path d="M2.20 2.10 L4 3.90 L5.80 2.10" fill="none" stroke="#555" stroke-width="1"/></svg>
<div class="t" style="left:641.00px;top:113px;font-size:8.9px;color:#404040;font-weight:normal;transform:scaleX(0.9110);transform-origin:0 0;">Sprache</div>
<svg class="a" style="left:720px;top:54px;" width="30" height="28" viewBox="0 0 30 28"><path d="M3.9 19.7 V5.5 H23" fill="none" stroke="#555" stroke-width="1.1"/><rect x="6.4" y="7.5" width="18.3" height="14" fill="#fff" stroke="#555" stroke-width="1.3"/><path d="M8 19.4 V9.3 H22.5 V13" fill="none" stroke="#b0b0b0" stroke-width="1"/><circle cx="17.6" cy="16.7" r="4.6" fill="#fafafa" stroke="#3d9ae0" stroke-width="1.3"/><path d="M20.9 20.1 L25.6 24.8" stroke="#3d9ae0" stroke-width="1.5"/></svg>
<div class="t" style="left:695.70px;top:84px;font-size:8.9px;color:#3b3b3b;font-weight:normal;transform:scaleX(1.0002);transform-origin:0 0;">Wiederverwendung</div>
<div class="t" style="left:710.40px;top:95px;font-size:8.9px;color:#3b3b3b;font-weight:normal;transform:scaleX(0.9874);transform-origin:0 0;">von Dateien</div>
<div class="t" style="left:684.40px;top:113px;font-size:8.9px;color:#404040;font-weight:normal;transform:scaleX(0.9770);transform-origin:0 0;">Wiederverwendung von...</div>
<svg class="a" style="left:798px;top:52px;" width="30" height="30" viewBox="0 0 30 30"><path d="M17 11.9 H25.3 M13 17.3 H21.2 M9.5 22.3 H17.2" stroke="#1d5cc8" stroke-width="3.1" stroke-linecap="round"/><path d="M4.3 26.5 L5.33 21.65 L17.97 4.38 L21.03 6.62 L8.39 23.89 Z" fill="#fff" stroke="#1d5cc8" stroke-width="1.3" stroke-linejoin="round"/><path d="M17.97 4.38 L18.6 3.6 C19.1 3 19.8 3 20.4 3.4 L21.6 4.3 C22.1 4.8 22.2 5.5 21.7 6 L21.03 6.62 L19.85 8.24 L16.79 6 Z" fill="#1d5cc8"/><path d="M4.3 26.5 L4.9 23.6 L6.9 25 Z" fill="#1d5cc8"/></svg>
<div class="t" style="left:801.90px;top:84px;font-size:8.9px;color:#3b3b3b;font-weight:normal;transform:scaleX(0.9720);transform-origin:0 0;">Editor</div>
<svg class="a" style="left:858px;top:54px;" width="26" height="26" viewBox="0 0 26 26"><path d="M5.9 5.8 Q5.9 4.5 7.2 4.5 H13.8 L18.6 9.3 V21 Q18.6 22.2 17.4 22.2 H7.2 Q5.9 22.2 5.9 21 Z" fill="#fff" stroke="#3a3a3a" stroke-width="1.3" stroke-linejoin="round"/><path d="M13.8 4.5 V8 Q13.8 9.3 15 9.3 H18.6" fill="none" stroke="#3a3a3a" stroke-width="1.2"/><path d="M12.4 16.6 V12.6 M10 14.8 L12.4 12.3 L14.8 14.8" fill="none" stroke="#333" stroke-width="1.3"/><rect x="9" y="18.2" width="6.9" height="1.4" fill="#8a8a8a"/></svg>
<div class="t" style="left:848.70px;top:84px;font-size:8.9px;color:#3b3b3b;font-weight:normal;transform:scaleX(0.9369);transform-origin:0 0;">Diese Datei</div>
<div class="t" style="left:855.70px;top:96px;font-size:8.9px;color:#3b3b3b;font-weight:normal;transform:scaleX(1.0293);transform-origin:0 0;">teilen</div>
<svg class="a" style="left:878.3px;top:96.5px;" width="8" height="6" viewBox="0 0 8 6"><path d="M2.40 2.20 L4 3.80 L5.60 2.20" fill="none" stroke="#555" stroke-width="1"/></svg>
<svg class="a" style="left:896px;top:54px;" width="28" height="26" viewBox="0 0 28 26"><circle cx="14" cy="12.9" r="9.1" fill="#064f74"/><path d="M8.52 20.17 A9.1 9.1 0 0 1 19.48 5.63 L14 12.9 Z" fill="#03b4e6"/><circle cx="14" cy="12.9" r="5.6" fill="#6dbf4b"/><circle cx="13.1" cy="12" r="5" fill="#fff"/></svg>
<div class="t" style="left:896.80px;top:84px;font-size:8.9px;color:#3b3b3b;font-weight:normal;transform:scaleX(0.9514);transform-origin:0 0;">Webex</div>
<svg class="a" style="left:905.6px;top:96.5px;" width="8" height="6" viewBox="0 0 8 6"><path d="M2.40 2.20 L4 3.80 L5.60 2.20" fill="none" stroke="#555" stroke-width="1"/></svg>
<div class="t" style="left:873.50px;top:113px;font-size:8.9px;color:#404040;font-weight:normal;transform:scaleX(0.9550);transform-origin:0 0;">Webex</div>
<svg class="a" style="left:937px;top:115px;" width="10" height="6" viewBox="0 0 10 6"><path d="M1 5 L5 1 L9 5" fill="none" stroke="#444" stroke-width="1"/></svg>
<div class="a" style="left:173px;top:143px;width:594px;height:840px;background:#fff;border:1px solid #d0d0d0;border-right-color:#dcdcdc;box-shadow:inset 1px 1px 0 #f0f0f0"></div>
<div class="t" style="left:244.00px;top:216px;font-size:10px;color:#1a1a1a;font-weight:normal;-webkit-text-stroke:0;transform:scaleX(1.0251);transform-origin:0 0;">Test</div>
<div class="a" style="left:626px;top:906px;width:72px;height:34px;border:2px solid #ee1111;box-shadow:2px 2px 3px rgba(0,0,0,.25);background:#fff"></div>
<div class="t" style="left:643.50px;top:918px;font-size:10px;color:#9a9a9a;font-weight:bold;">Internal</div>
<div class="a" style="left:2px;top:1002px;width:950px;height:18px;background:#f3f3f3;border-top:1px solid #cfcfcf;border-bottom:1px solid #a8a8a8"></div>
<div class="t" style="left:6.70px;top:1008px;font-size:8.2px;color:#4a4a4a;font-weight:normal;">Seite 1 von 1</div>
<div class="t" style="left:71.20px;top:1007px;font-size:8.4px;color:#4a4a4a;font-weight:normal;">1 Wort</div>
<svg class="a" style="left:110px;top:1006.5px;" width="12" height="9" viewBox="0 0 12 9"><path d="M0.8 0.8 H4.5 C5.3 0.8 5.8 1.3 5.8 2 V8.2 C5.5 7.6 5 7.4 4.5 7.4 H0.8 Z M5.8 2 C5.8 1.3 6.3 0.8 7 0.8 H10.8 V5 L8.5 8.2 H5.8" fill="none" stroke="#555" stroke-width="0.9"/></svg>
<div class="t" style="left:135.00px;top:1007px;font-size:8.5px;color:#4a4a4a;font-weight:normal;">Deutsch (Deutschland)</div>
<div class="t" style="left:235.00px;top:1007px;font-size:8.5px;color:#333;font-weight:normal;">Textvorhersagen: ein</div>
<svg class="a" style="left:328.5px;top:1006px;" width="12" height="10" viewBox="0 0 12 10"><circle cx="5.5" cy="1.5" r="1.2" fill="none" stroke="#555" stroke-width="0.8"/><path d="M1 3.5 H10 M5.5 3.5 V6 L3 9.5 M5.5 6 L8 9.5" fill="none" stroke="#555" stroke-width="0.8"/><path d="M7.5 6.5 L11 9.8 M11 6.5 L7.5 9.8" stroke="#555" stroke-width="0.8"/></svg>
<div class="t" style="left:343.10px;top:1007px;font-size:8.6px;color:#4a4a4a;font-weight:normal;">Barrierefreiheit: Untersuchen</div>
<svg class="a" style="left:562.5px;top:1006px;" width="12" height="10" viewBox="0 0 12 10"><path d="M4 8 H0.8 V0.8 H10.5 V4" fill="none" stroke="#555" stroke-width="0.9"/><circle cx="8" cy="7" r="2.2" fill="none" stroke="#555" stroke-width="0.9"/><path d="M8 4 V10 M5 7 H11" stroke="#555" stroke-width="0.6"/></svg>
<div class="t" style="left:575.70px;top:1007px;font-size:8.8px;color:#4a4a4a;font-weight:normal;">Anzeigeeinstellungen</div>
<svg class="a" style="left:671.5px;top:1006px;" width="12" height="10" viewBox="0 0 12 10"><path d="M0.8 2.5 V0.8 H2.5 M9 0.8 H10.8 V2.5 M10.8 7.5 V9.2 H9 M2.5 9.2 H0.8 V7.5" fill="none" stroke="#555" stroke-width="0.9"/><path d="M3 1.5 H6.5 L8.5 3.5 V8.5 H3 Z" fill="none" stroke="#555" stroke-width="0.9"/></svg>
<div class="t" style="left:685.10px;top:1007px;font-size:8.3px;color:#4a4a4a;font-weight:normal;">Fokus</div>
<svg class="a" style="left:726.5px;top:1006px;" width="11" height="10" viewBox="0 0 11 10"><path d="M0.8 0.8 H4.5 L5.5 1.5 L6.5 0.8 H10.2 V9 H6.5 L5.5 9.5 L4.5 9 H0.8 Z M5.5 1.5 V9" fill="none" stroke="#555" stroke-width="0.9"/><path d="M2 3 H4 M2 5 H4 M2 7 H4 M7 3 H9 M7 5 H9 M7 7 H9" stroke="#777" stroke-width="0.6"/></svg>
<div class="a" style="left:747px;top:1003px;width:30px;height:15px;background:#d5d5d5"></div>
<svg class="a" style="left:756.5px;top:1005.5px;" width="10" height="11" viewBox="0 0 10 11"><rect x="0.8" y="0.8" width="8.4" height="9.4" fill="none" stroke="#555" stroke-width="0.9"/><path d="M2.5 3 H7.5 M2.5 5 H7.5 M2.5 7 H7.5" stroke="#555" stroke-width="0.7"/></svg>
<svg class="a" style="left:786px;top:1005.5px;" width="12" height="11" viewBox="0 0 12 11"><path d="M6 9.5 H0.8 V0.8 H10 V5" fill="none" stroke="#555" stroke-width="0.9"/><path d="M2.5 3 H8 M2.5 5 H5" stroke="#555" stroke-width="0.7"/><circle cx="8.5" cy="8" r="2.6" fill="#f3f3f3" stroke="#555" stroke-width="0.9"/><path d="M5.9 8 H11.1 M8.5 5.4 V10.6" stroke="#555" stroke-width="0.6"/></svg>
<div class="a" style="left:813px;top:1010px;width:5px;height:1px;background:#666"></div>
<div class="a" style="left:821px;top:1010px;width:74.5px;height:1px;background:#9a9a9a"></div>
<div class="a" style="left:857.5px;top:1006px;width:3px;height:8px;background:#444"></div>
<div class="a" style="left:899px;top:1010px;width:7px;height:1px;background:#666"></div>
<div class="a" style="left:902px;top:1007px;width:1px;height:7px;background:#666"></div>
<div class="t" style="left:915.70px;top:1008px;font-size:7.9px;color:#4a4a4a;font-weight:normal;">100 %</div>
<div class="a" style="left:0px;top:1020px;width:955px;height:4px;background:#f7f7f7"></div>
<div class="a" style="left:44px;top:1020px;width:1px;height:4px;background:#dddddd"></div>
<div class="a" style="left:185px;top:1020px;width:1px;height:4px;background:#e0e0e0"></div>
<div class="a" style="left:754px;top:1020px;width:3px;height:4px;background:#111"></div>
</body></html>
